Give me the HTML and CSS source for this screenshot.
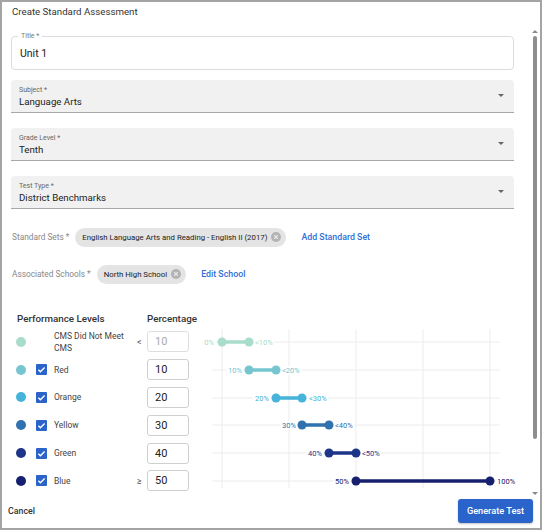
FILE: index.html
```html
<!DOCTYPE html>
<html lang="en">
<head>
  <meta charset="UTF-8" />
  <title>Create Standard Assessment</title>
  <link rel="stylesheet" href="styles.css">
</head>
<body>
  <div class="dialog">
    <div class="dialog-title">Create Standard Assessment</div>

    <div class="dialog-main">
      <div class="content">
        <div class="field outlined">
          <span class="field-label">Title *</span>
          <div class="field-value">Unit 1</div>
        </div>

        <div class="field filled">
          <span class="field-label">Subject *</span>
          <div class="field-value">Language Arts</div>
          <span class="caret"></span>
        </div>

        <div class="field filled">
          <span class="field-label">Grade Level *</span>
          <div class="field-value">Tenth</div>
          <span class="caret"></span>
        </div>

        <div class="field filled">
          <span class="field-label">Test Type *</span>
          <div class="field-value">District Benchmarks</div>
          <span class="caret"></span>
        </div>

        <div class="chip-row first">
          <span class="row-label">Standard Sets *</span>
          <span class="chip">English Language Arts and Reading - English II (2017)
            <svg class="chip-x" viewBox="0 0 10 10"><circle cx="5" cy="5" r="5" fill="#b3b3b3"/><path d="M3.2 3.2l3.6 3.6M6.8 3.2l-3.6 3.6" stroke="#ececec" stroke-width="1.2"/></svg>
          </span>
          <a class="link" href="#">Add Standard Set</a>
        </div>

        <div class="chip-row">
          <span class="row-label">Associated Schools *</span>
          <span class="chip">North High School
            <svg class="chip-x" viewBox="0 0 10 10"><circle cx="5" cy="5" r="5" fill="#b3b3b3"/><path d="M3.2 3.2l3.6 3.6M6.8 3.2l-3.6 3.6" stroke="#ececec" stroke-width="1.2"/></svg>
          </span>
          <a class="link" href="#">Edit School</a>
        </div>

        <div class="levels">
          <div class="levels-table">
            <div class="levels-head">
              <span class="head-name">Performance Levels</span>
              <span class="head-pct">Percentage</span>
            </div>

            <div class="level-row">
              <span class="dot" style="background:#a8dccb"></span>
              <span class="box-spacer"></span>
              <span class="level-name">CMS Did Not Meet<br>CMS</span>
              <span class="cmp">&lt;</span>
              <span class="pct disabled">10</span>
            </div>
            <div class="level-row">
              <span class="dot" style="background:#76c6d1"></span>
              <span class="checkbox"><svg viewBox="0 0 12 12"><path d="M2.6 6.2l2.2 2.2 4.6-4.6" fill="none" stroke="#fff" stroke-width="1.5"/></svg></span>
              <span class="level-name">Red</span>
              <span class="cmp"></span>
              <span class="pct">10</span>
            </div>
            <div class="level-row">
              <span class="dot" style="background:#45b3da"></span>
              <span class="checkbox"><svg viewBox="0 0 12 12"><path d="M2.6 6.2l2.2 2.2 4.6-4.6" fill="none" stroke="#fff" stroke-width="1.5"/></svg></span>
              <span class="level-name">Orange</span>
              <span class="cmp"></span>
              <span class="pct">20</span>
            </div>
            <div class="level-row">
              <span class="dot" style="background:#2f72ae"></span>
              <span class="checkbox"><svg viewBox="0 0 12 12"><path d="M2.6 6.2l2.2 2.2 4.6-4.6" fill="none" stroke="#fff" stroke-width="1.5"/></svg></span>
              <span class="level-name">Yellow</span>
              <span class="cmp"></span>
              <span class="pct">30</span>
            </div>
            <div class="level-row">
              <span class="dot" style="background:#1d3588"></span>
              <span class="checkbox"><svg viewBox="0 0 12 12"><path d="M2.6 6.2l2.2 2.2 4.6-4.6" fill="none" stroke="#fff" stroke-width="1.5"/></svg></span>
              <span class="level-name">Green</span>
              <span class="cmp"></span>
              <span class="pct">40</span>
            </div>
            <div class="level-row">
              <span class="dot" style="background:#16206e"></span>
              <span class="checkbox"><svg viewBox="0 0 12 12"><path d="M2.6 6.2l2.2 2.2 4.6-4.6" fill="none" stroke="#fff" stroke-width="1.5"/></svg></span>
              <span class="level-name">Blue</span>
              <span class="cmp">&ge;</span>
              <span class="pct">50</span>
            </div>
          </div>

          <!-- range chart: x = 22 + pct * 2.68, rows every 27.8 -->
          <svg class="chart" width="318" height="182" viewBox="0 0 318 182">
            <g stroke="#ececec" stroke-width="1">
              <line x1="22" y1="18" x2="22" y2="177"/>
              <line x1="89" y1="18" x2="89" y2="177"/>
              <line x1="156" y1="18" x2="156" y2="177"/>
              <line x1="223" y1="18" x2="223" y2="177"/>
              <line x1="290" y1="18" x2="290" y2="177"/>
              <line x1="12" y1="31" x2="300" y2="31"/>
              <line x1="12" y1="59" x2="300" y2="59"/>
              <line x1="12" y1="87" x2="300" y2="87"/>
              <line x1="12" y1="114" x2="300" y2="114"/>
              <line x1="12" y1="142" x2="300" y2="142"/>
              <line x1="12" y1="170" x2="300" y2="170"/>
            </g>
            <g font-size="7.5" stroke="#fff" stroke-width="4" paint-order="stroke">
              <text x="14" y="33.7" text-anchor="end" fill="#a8dccb">0%</text>
              <text x="55" y="33.7" fill="#a8dccb">&lt;10%</text>
              <text x="42" y="61.7" text-anchor="end" fill="#76c6d1">10%</text>
              <text x="82" y="61.7" fill="#76c6d1">&lt;20%</text>
              <text x="69" y="89.7" text-anchor="end" fill="#45b3da">20%</text>
              <text x="109" y="89.7" fill="#45b3da">&lt;30%</text>
              <text x="96" y="116.7" text-anchor="end" fill="#2f72ae">30%</text>
              <text x="135" y="116.7" fill="#2f72ae">&lt;40%</text>
              <text x="122" y="144.7" text-anchor="end" fill="#1d3588">40%</text>
              <text x="162" y="144.7" fill="#1d3588">&lt;50%</text>
              <text x="149" y="172.7" text-anchor="end" fill="#16206e">50%</text>
              <text x="297" y="172.7" fill="#16206e">100%</text>
            </g>
            <g>
              <line x1="22" y1="31" x2="49" y2="31" stroke="#a8dccb" stroke-width="3.5"/>
              <circle cx="22" cy="31" r="4.5" fill="#a8dccb"/>
              <circle cx="49" cy="31" r="4.5" fill="#a8dccb"/>
              <line x1="49" y1="59" x2="76" y2="59" stroke="#76c6d1" stroke-width="3.5"/>
              <circle cx="49" cy="59" r="4.5" fill="#76c6d1"/>
              <circle cx="76" cy="59" r="4.5" fill="#76c6d1"/>
              <line x1="76" y1="87" x2="102" y2="87" stroke="#45b3da" stroke-width="3.5"/>
              <circle cx="76" cy="87" r="4.5" fill="#45b3da"/>
              <circle cx="102" cy="87" r="4.5" fill="#45b3da"/>
              <line x1="102" y1="114" x2="129" y2="114" stroke="#2f72ae" stroke-width="3.5"/>
              <circle cx="102" cy="114" r="4.5" fill="#2f72ae"/>
              <circle cx="129" cy="114" r="4.5" fill="#2f72ae"/>
              <line x1="129" y1="142" x2="156" y2="142" stroke="#1d3588" stroke-width="3.5"/>
              <circle cx="129" cy="142" r="4.5" fill="#1d3588"/>
              <circle cx="156" cy="142" r="4.5" fill="#1d3588"/>
              <line x1="156" y1="170" x2="290" y2="170" stroke="#16206e" stroke-width="3.5"/>
              <circle cx="156" cy="170" r="4.5" fill="#16206e"/>
              <circle cx="290" cy="170" r="4.5" fill="#16206e"/>
            </g>
          </svg>
        </div>
      </div>

      <div class="scrollbar">
        <span class="arrow up"></span>
        <span class="thumb"></span>
        <span class="arrow down"></span>
      </div>
    </div>

    <div class="dialog-actions">
      <button class="btn-text">Cancel</button>
      <button class="btn-primary">Generate Test</button>
    </div>
  </div>
</body>
</html>
```

FILE: styles.css
```css
body {
  margin: 0;
  font-family: Roboto, 'Liberation Sans', sans-serif;
  color: #333;
  background: #fff;
}

.dialog {
  width: 542px;
  height: 530px;
  box-sizing: border-box;
  border: 2px solid #a4a4a4;
  display: flex;
  flex-direction: column;
  background: #fff;
}

.dialog-title {
  font-size: 9.7px;
  color: #333;
  padding: 4px 0 0 10px;
  height: 26px;
  box-sizing: border-box;
}

.dialog-main {
  flex: 1;
  display: flex;
  min-height: 0;
}

.content {
  flex: 1;
  overflow: hidden;
  padding: 8px 16px 0 9px;
}

/* text fields */
.field {
  position: relative;
  height: 33px;
  box-sizing: border-box;
  border-radius: 4px;
}

.field.outlined {
  border: 1px solid #dcdcdc;
  height: 34px;
  margin-bottom: 10px;
}

.field.outlined .field-label {
  position: absolute;
  top: -5px;
  left: 6px;
  padding: 0 3px;
  background: #fff;
  font-size: 7px;
  color: #777;
}

.field.outlined .field-value {
  padding: 10px 0 0 8px;
  font-size: 10.5px;
}

.field.filled {
  background: #f1f1f1;
  border-bottom: 1px solid #a9a9a9;
  border-radius: 4px 4px 0 0;
  margin-bottom: 15px;
  padding: 5px 0 0 8px;
}

.field.filled .field-label {
  display: block;
  font-size: 7px;
  color: #666;
  line-height: 10px;
}

.field-value {
  font-size: 9.7px;
  color: #222;
  line-height: 14px;
}

.caret {
  position: absolute;
  right: 10px;
  top: 14px;
  border-left: 3px solid transparent;
  border-right: 3px solid transparent;
  border-top: 3px solid #666;
}

/* chips */
.chip-row {
  display: flex;
  align-items: center;
  height: 20px;
  margin-bottom: 17px;
  padding-left: 1px;
}

.chip-row.first {
  margin-top: 18px;
}

.row-label {
  font-size: 8.3px;
  color: #888;
  margin-right: 6px;
}

.chip {
  display: inline-flex;
  align-items: center;
  gap: 4px;
  height: 19px;
  padding: 0 5px 0 7px;
  border-radius: 10px;
  background: #e4e4e4;
  font-size: 7.8px;
  color: #222;
}

.chip-x {
  width: 10px;
  height: 10px;
}

.link {
  margin-left: 15px;
  font-size: 8.8px;
  font-weight: 500;
  color: #2f6fd6;
  text-decoration: none;
}

/* performance levels */
.levels {
  display: flex;
  margin-top: 29px;
}

.levels-table {
  width: 189px;
  flex-shrink: 0;
}

.levels-head {
  display: flex;
  font-size: 9.8px;
  font-weight: 500;
  color: #333;
  height: 15px;
  padding-left: 6px;
}

.head-name {
  width: 130px;
}

.level-row {
  display: flex;
  align-items: center;
  height: 27.8px;
  padding-left: 5px;
}

.dot {
  width: 10px;
  height: 10px;
  border-radius: 50%;
  flex-shrink: 0;
}

.checkbox, .box-spacer {
  width: 11px;
  height: 11px;
  margin-left: 10px;
  flex-shrink: 0;
}

.checkbox {
  background: #2a63c9;
  border-radius: 1px;
}

.checkbox svg {
  display: block;
  width: 11px;
  height: 11px;
}

.level-name {
  width: 83px;
  margin-left: 7px;
  font-size: 8.5px;
  line-height: 12px;
  color: #444;
}

.cmp {
  width: 10px;
  font-size: 9px;
  color: #555;
}

.pct {
  width: 42px;
  height: 21px;
  box-sizing: border-box;
  border: 1px solid #cfcfcf;
  border-radius: 3px;
  font-size: 11px;
  line-height: 19px;
  padding-left: 7px;
  color: #222;
}

.pct.disabled {
  color: #aaa;
  border-color: #dedede;
}

.chart {
  display: block;
  flex-shrink: 0;
  margin-top: -2px;
  font-family: Roboto, 'Liberation Sans', sans-serif;
}

/* fake scrollbar */
.scrollbar {
  width: 9px;
  margin-right: 1px;
  display: flex;
  flex-direction: column;
  align-items: center;
  padding-top: 2px;
  height: 465px;
}

.arrow {
  border-left: 3px solid transparent;
  border-right: 3px solid transparent;
}

.arrow.up {
  border-bottom: 3px solid #8a8a8a;
}

.arrow.down {
  border-top: 3px solid #8a8a8a;
  margin-top: auto;
}

.thumb {
  width: 4px;
  height: 403px;
  margin-top: 3px;
  background: #8d8d8d;
  border-radius: 2px;
}

/* footer */
.dialog-actions {
  display: flex;
  justify-content: space-between;
  align-items: center;
  height: 34px;
  box-sizing: border-box;
  padding: 0 7px 1px 6px;
}

.btn-text {
  background: none;
  border: none;
  font-family: inherit;
  font-size: 8.8px;
  font-weight: 500;
  color: #333;
  padding: 0;
}

.btn-primary {
  background: #2a63c9;
  color: #fff;
  border: none;
  border-radius: 3px;
  font-family: inherit;
  font-size: 9.2px;
  font-weight: 500;
  white-space: nowrap;
  width: 75px;
  height: 24px;
  padding: 0;
  box-shadow: 0 1px 2px rgba(0,0,0,0.25);
}
```
